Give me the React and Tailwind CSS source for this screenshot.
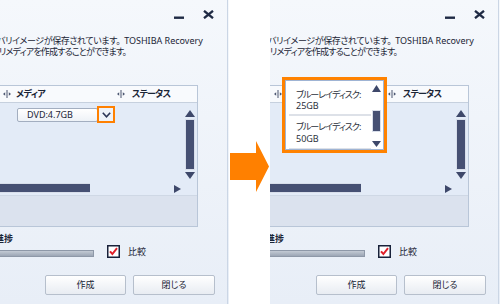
import React from "react";

const FONT = "font-['Noto_Sans','Noto_Sans_CJK_JP',sans-serif] [font-feature-settings:'palt']";

function ColSep() {
  return (
    <svg width="8" height="8" viewBox="0 0 8 8" className="shrink-0">
      <path d="M0 4 L2.2 2.3 L2.2 5.7Z" fill="#4a5570" />
      <rect x="3.5" y="0" width="1" height="8" fill="#4a5570" />
      <path d="M8 4 L5.8 2.3 L5.8 5.7Z" fill="#4a5570" />
    </svg>
  );
}

function TriUp({ w = 10, h = 7 }) {
  return (
    <svg width={w} height={h} viewBox={`0 0 ${w} ${h}`} className="shrink-0">
      <path d={`M${w / 2} 0 L${w} ${h} L0 ${h}Z`} fill="#3e486a" />
    </svg>
  );
}
function TriDown({ w = 10, h = 7 }) {
  return (
    <svg width={w} height={h} viewBox={`0 0 ${w} ${h}`} className="shrink-0">
      <path d={`M0 0 L${w} 0 L${w / 2} ${h}Z`} fill="#3e486a" />
    </svg>
  );
}

function Dropdown() {
  return (
    <div className="absolute left-[12px] top-[77px] w-[105px] h-[76px] border-[3px] border-[#ff8200] z-10">
      <div className="w-full h-full border border-[#9fb4d4] bg-white flex overflow-hidden">
        <div className="flex-1 text-[9px] leading-[11px] text-[#2b303b]">
          <div className="pl-[10px] pt-[8px]">
            <div className="tracking-[-1px]">ブルーレイディスク:</div>
            <div>25GB</div>
          </div>
          <div className="ml-[3px] w-[82px] h-[2px] mt-[3px] bg-[#dde1e8]" />
          <div className="pl-[10px] pt-[5px]">
            <div className="tracking-[-1px]">ブルーレイディスク:</div>
            <div className="mt-[1px]">50GB</div>
          </div>
          <div className="ml-[3px] w-[82px] h-[2px] mt-[4px] bg-[#dde1e8]" />
        </div>
        <div className="w-[9px] mr-[2px] pt-[4px] flex flex-col items-center">
          <TriUp w={9} h={7} />
          <div className="mt-[18px] w-[9px] h-[22px] bg-[#465073] border border-[#d8deea]" />
          <div className="mt-[9px]">
            <TriDown w={9} h={6} />
          </div>
        </div>
      </div>
    </div>
  );
}

function Win({ open, className }) {
  return (
    <div
      className={`relative h-[304px] shrink-0 overflow-hidden bg-gradient-to-b from-[#f5f8fc] to-[#e8eef7] ${className}`}
    >
      <div className="w-[228px] h-full border-r border-[#cbd6e5] flex flex-col text-[#1b2536]">
        {/* title bar */}
        <div className="flex h-[29px] items-center justify-end pr-[13px] gap-[19px]">
          <svg width="10" height="10" viewBox="0 0 10 10">
            <rect x="0" y="6.5" width="10" height="2.4" fill="#1f2a44" />
          </svg>
          <svg width="11" height="9" viewBox="0 0 11 9">
            <path d="M1 0.8 L10 8.2 M10 0.8 L1 8.2" stroke="#1f2a44" strokeWidth="2.3" />
          </svg>
        </div>
        {/* description */}
        <div className="mt-[6px] text-[9px] leading-[11px] whitespace-nowrap">
          <div className="ml-[-3px]">
            <span className="tracking-[-0.4px]">バリイメージが保存されています。</span>
            <span className="ml-[4px]">TOSHIBA Recovery</span>
          </div>
          <div className="ml-[-1px] tracking-[-0.8px]">リメディアを作成することができます。</div>
        </div>
        {/* list panel */}
        <div className="mt-[28px] ml-[-10px] w-[208px] border border-[#b9c6d8] flex flex-col">
          <div className="h-[17px] flex items-center pl-[12px] bg-[#f8fafd] border-b border-[#c6d0de] text-[9px] font-bold">
            <div className="w-[114px] flex items-center gap-[5px]">
              <ColSep />
              <span className="tracking-[-0.6px]">メディア</span>
            </div>
            <div className="flex items-center gap-[7px]">
              <ColSep />
              <span className="tracking-[-0.8px]">ステータス</span>
            </div>
          </div>
          <div className="bg-[#e3ebf7]">
            <div className="flex h-[80px]">
              <div className="flex-1 pl-[26px] pt-[3px]">
                <div className="flex items-center">
                  <div className="w-[81px] h-[14px] border border-[#a3aec0] rounded-[2px] bg-gradient-to-b from-white to-[#eef2f7] pl-[9px] text-[9px] leading-[12px]">
                    DVD:4.7GB
                  </div>
                  <div className="ml-[-1px] w-[18px] h-[17px] border-2 border-[#ff8000] bg-[#eef2f8] flex items-center justify-center">
                    <svg width="9" height="6" viewBox="0 0 9 6">
                      <path d="M0.8 0.8 L4.5 4.8 L8.2 0.8" stroke="#2c3556" strokeWidth="1.6" fill="none" />
                    </svg>
                  </div>
                </div>
              </div>
              <div className="w-[10px] mr-[2px] pt-[7px] flex flex-col items-center">
                <TriUp w={10} h={7} />
                <div className="mt-[2px] w-[10px] h-[51px] bg-[#465073] border border-[#d8deea]" />
                <div className="mt-[2px]">
                  <TriDown w={10} h={7} />
                </div>
              </div>
            </div>
            <div className="h-[12px] flex items-start">
              <div className="w-[99px] h-[10px] bg-[#465073] border-y border-[#d8deea]" />
              <div className="ml-auto mr-[16px] mt-[2px]">
                <svg width="7" height="8" viewBox="0 0 7 8">
                  <path d="M0 0 L7 4 L0 8Z" fill="#3e486a" />
                </svg>
              </div>
            </div>
          </div>
          <div className="h-[31px] border-t border-[#cfd8e5] bg-[#dbe2ee]" />
        </div>
        {/* progress */}
        <div className="mt-[6px] ml-[-5px] text-[9px] leading-[11px] font-bold">進捗</div>
        <div className="h-[14px] flex items-center">
          <div className="ml-[-10px] w-[104px] h-[7px] self-end mb-[1px] border border-[#8e98a8] bg-gradient-to-b from-[#c3cad4] to-[#9ca6b5]" />
          <div className="ml-[13px]">
            <svg width="13" height="13" viewBox="0 0 13 13">
              <rect x="0.75" y="0.75" width="11.5" height="11.5" fill="#fff" stroke="#18213a" strokeWidth="1.5" />
              <path d="M3 6.3 L5.4 9 L10 3.2" stroke="#e0202a" strokeWidth="2" fill="none" />
            </svg>
          </div>
          <span className="ml-[8px] text-[9px] leading-[11px]">比較</span>
        </div>
        {/* buttons */}
        <div className="mt-[17px] flex justify-end pr-[12px] gap-[7px] text-[9px]">
          <div className="w-[81px] h-[20px] border border-[#b6bfcc] rounded-[2px] bg-gradient-to-b from-white to-[#e8ecf2] flex items-center justify-center">
            作成
          </div>
          <div className="w-[82px] h-[20px] border border-[#b6bfcc] rounded-[2px] bg-gradient-to-b from-white to-[#e8ecf2] flex items-center justify-center">
            閉じる
          </div>
        </div>
      </div>
      {open && <Dropdown />}
    </div>
  );
}

export default function App() {
  return (
    <div className={`w-[500px] h-[304px] bg-white flex overflow-hidden ${FONT}`}>
      <Win className="w-[229px]" />
      <div className="w-[41px] shrink-0 pt-[141px]">
        <svg width="41" height="51" viewBox="0 0 41 51">
          <path d="M1 12 L27 12 L27 0 L40 25.5 L27 51 L27 39 L1 39Z" fill="#ff8000" />
        </svg>
      </div>
      <Win open className="w-[230px] pl-[1px]" />
    </div>
  );
}
